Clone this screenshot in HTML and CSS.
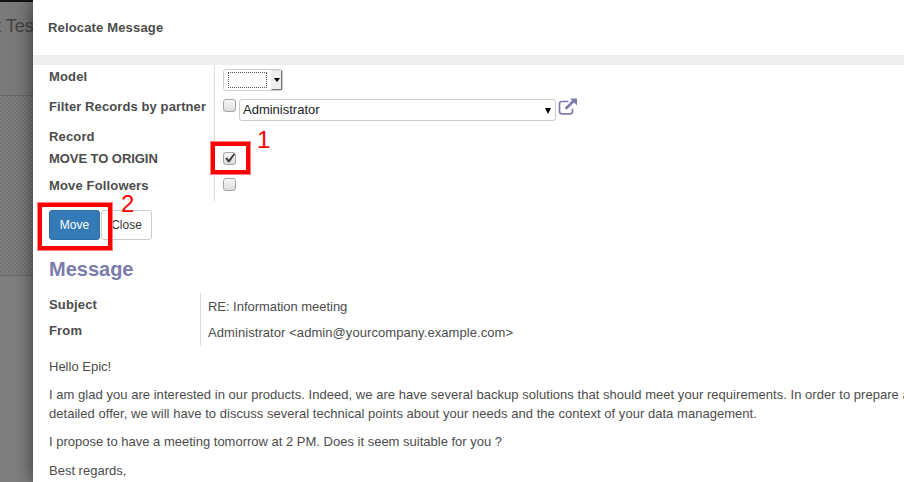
FILE: index.html
```html
<!DOCTYPE html>
<html lang="en">
<head>
<meta charset="utf-8">
<title>Relocate Message</title>
<link rel="stylesheet" href="styles.css">
</head>
<body>
<div class="app">
  <aside class="backdrop">
    <div class="topbar"></div>
    <div class="crumb">t Test</div>
    <div class="sheet-bg"></div>
  </aside>
  <main class="modal">
    <header class="modal-header">Relocate Message</header>
    <div class="strip"></div>
    <section class="form">
      <div class="row r30"><div class="label">Model</div><div class="cell"><div class="select"><span class="focus"></span><span class="drop"><i class="caret"></i></span></div></div></div>
      <div class="row r30"><div class="label wide">Filter Records by partner</div><div class="cell">
        <span class="check"></span>
        <div class="combo"><span>Administrator</span><i class="arrow"></i></div>
        <svg class="external" viewBox="0 0 20 18"><path d="M10.5 3.5H3.7Q1.5 3.5 1.5 5.7V13.6Q1.5 15.8 3.7 15.8H12.3Q14.5 15.8 14.5 13.6V10.7" fill="none" stroke="#7c7bad" stroke-width="1.7"/><path d="M7.7 10.7L15.8 2.8" stroke="#7c7bad" stroke-width="2.7"/><path d="M12 .5H19V7.5Z" fill="#7c7bad"/></svg>
      </div></div>
      <div class="row r22"><div class="label">Record</div><div class="cell"></div></div>
      <div class="row r27"><div class="label caps">MOVE TO ORIGIN</div><div class="cell"><span class="check on"><svg viewBox="0 0 13 13"><path d="M2.2 6.2L4.2 5.5L5.7 7.8L10.6 1.4L12.2 2L6.6 10.2L5 10.3Z" fill="#383b40"/></svg></span><div class="mark mark-one"><b class="num">1</b></div></div></div>
      <div class="row r27"><div class="label">Move Followers</div><div class="cell"><span class="check low"></span></div></div>
    </section>
    <div class="buttons"><span class="btn primary">Move</span><span class="btn">Close</span><div class="mark mark-two"><b class="num">2</b></div></div>
    <h2>Message</h2>
    <section class="details">
      <div class="drow"><div class="label">Subject</div><div class="value">RE: Information meeting</div></div>
      <div class="drow"><div class="label">From</div><div class="value address">Administrator &lt;admin@yourcompany.example.com&gt;</div></div>
    </section>
    <article class="body">
      <p>Hello Epic!</p>
      <p><span class="line l1">I am glad you are interested in our products. Indeed, we are have several backup solutions that should meet your requirements. In order to prepare a</span><span class="line l2">detailed offer, we will have to discuss several technical points about your needs and the context of your data management.</span></p>
      <p class="l3">I propose to have a meeting tomorrow at 2 PM. Does it seem suitable for you ?</p>
      <p>Best regards,</p>
    </article>
  </main>
</div>
</body>
</html>
```
FILE: styles.css
```css
* { box-sizing: border-box; }
body { margin: 0; width: 904px; height: 482px; overflow: hidden; background: #7f7f7f; font: 13px/19px "Liberation Sans", Arial, sans-serif; color: #4c4c4c; }
.app { display: flex; height: 482px; }
.backdrop { width: 33px; flex: none; overflow: hidden; background: #7f7f7f; }
.topbar { height: 2px; background: #111; }
.crumb { height: 94px; border-bottom: 1px solid #696969; background: #7a7a7a; padding-top: 13px; margin-left: -4px; font-size: 18px; line-height: 22px; white-space: nowrap; color: #444; }
.sheet-bg { height: 180px; border-bottom: 1px solid #6b6b6b; background: conic-gradient(#757575 25%, #7f7f7f 0 50%, #757575 0 75%, #7f7f7f 0) 0 0 / 4px 4px; }
.modal { position: relative; width: 871px; flex: none; height: 482px; background: #fff; box-shadow: 0 0 18px rgba(0,0,0,.6); }
.modal-header { height: 55px; padding: 18px 0 0 15px; font-weight: bold; letter-spacing: .16px; }
.strip { height: 10px; background: #efeeee; }
.form { padding-left: 16px; }
.row { display: flex; }
.r30 { height: 30px; }
.r22 { height: 22px; }
.r27 { height: 27px; }
.label { width: 166px; flex: none; border-right: 1px solid #ddd; padding-top: 2px; font-weight: bold; letter-spacing: .15px; white-space: nowrap; }
.wide { letter-spacing: .1px; }
.caps { letter-spacing: -.06px; }
.cell { position: relative; display: flex; padding: 4px 0 0 8px; }
.select { width: 60px; height: 22px; border: 1px solid #ccc; border-radius: 3px; display: flex; justify-content: space-between; }
.focus { width: 39px; height: 16px; margin: 2px 0 0 4px; border: 1px dotted #555; }
.drop { width: 11px; height: 20px; background: #eee; border: 1px solid #777; border-top-color: #ddd; border-left-color: #eee; display: flex; align-items: center; justify-content: center; }
.caret { border: 3px solid transparent; border-top: 4px solid #000; border-bottom: 0; }
.check { width: 13px; height: 13px; flex: none; border: 1px solid #a5a5a5; border-radius: 3px; background: linear-gradient(#f8f8f8, #dcdcdc); }
.on { margin-top: 1px; }
.on svg { display: block; width: 13px; height: 13px; margin: -1px; }
.combo { width: 317px; height: 22px; margin-left: 3px; border: 1px solid #ccc; border-radius: 3px; padding: 0 4px 0 3px; display: flex; justify-content: space-between; color: #222; line-height: 20px; }
.arrow { margin-top: 8px; height: 6px; border: 3.5px solid transparent; border-top: 6px solid #000; border-bottom: 0; }
.external { width: 20px; height: 18px; margin: -1px 0 0 2px; }
.mark { position: absolute; border: 5px solid #f00; outline: 1px solid #ff8080; outline-offset: -1px; }
.mark-one { left: -5px; top: -6px; width: 41px; height: 34px; }
.mark-two { left: -12px; top: -8px; width: 76px; height: 49px; }
.num { position: absolute; font-weight: normal; font-size: 24px; line-height: 24px; color: #f00; }
.mark-one .num { left: 42px; top: -18px; }
.mark-two .num { left: 79px; top: -15px; }
.buttons { position: relative; display: flex; gap: 1px; margin: 9px 0 0 16px; height: 30px; }
.btn { width: 51px; border: 1px solid #ccc; border-radius: 3px; text-align: center; font-size: 12px; line-height: 28px; color: #333; }
.primary { background: #337ab7; border-color: #2e6da4; color: #fff; }
h2 { margin: 17px 0 0 16px; height: 36px; font-size: 20px; line-height: 24px; color: #7c7bad; }
.details { margin-left: 16px; height: 53px; }
.drow { display: flex; height: 26px; }
.drow:last-child { height: 27px; }
.details .label { width: 152px; }
.value { padding: 4px 0 0 7px; white-space: nowrap; letter-spacing: -.04px; }
.address { letter-spacing: .07px; }
.body { margin: 11px 0 0 16px; white-space: nowrap; }
.body p { margin: 0 0 9px; }
.body .l3 { margin-bottom: 10px; }
.line { display: block; letter-spacing: .035px; }
```
